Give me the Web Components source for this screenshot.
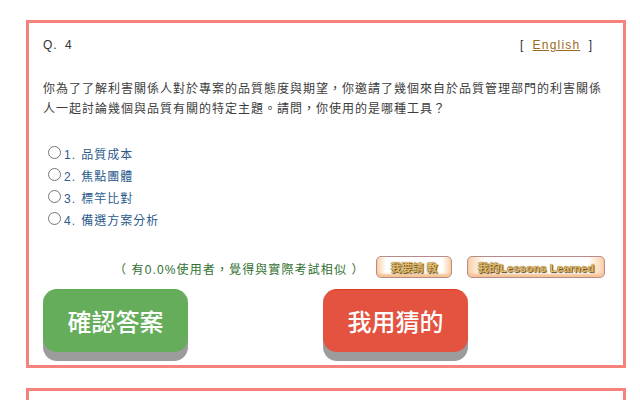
<!DOCTYPE html>
<html lang="zh-Hant-TW">
<head>
<meta charset="utf-8">
<title>Q4</title>
<style>
html, body { margin: 0; padding: 0; height: 400px; overflow: hidden; background: #fff; }
body { font-family: "Liberation Sans", "Noto Sans CJK TC", sans-serif; }
</style>
</head>
<body>
<quiz-page>
  <quiz-card>
    <quiz-head num="Q. 4"></quiz-head>
    <quiz-question>你為了了解利害關係人對於專案的品質態度與期望，你邀請了幾個來自於品質管理部門的利害關係人一起討論幾個與品質有關的特定主題。請問，你使用的是哪種工具？</quiz-question>
    <quiz-options>
      <quiz-option>1. 品質成本</quiz-option>
      <quiz-option>2. 焦點團體</quiz-option>
      <quiz-option>3. 標竿比對</quiz-option>
      <quiz-option>4. 備選方案分析</quiz-option>
    </quiz-options>
    <quiz-stats>
      <span slot="note">（ 有0.0%使用者，覺得與實際考試相似 ）</span>
      <gold-button style="width:76px">我要請 教</gold-button>
      <gold-button style="width:138px;letter-spacing:.25px">我的Lessons Learned</gold-button>
    </quiz-stats>
    <quiz-actions>
      <big-button color="#65ad5b" edge="#5cab50">確認答案</big-button>
      <big-button color="#e35340" edge="#e23c20">我用猜的</big-button>
    </quiz-actions>
  </quiz-card>
  <quiz-card class="next" style="height:12px;border-bottom:0"></quiz-card>
</quiz-page>
<script>
class quizPage extends HTMLElement{
    constructor(){
        super();
        const shadow = this.attachShadow({ mode: "open" });
        shadow.innerHTML = `
        <style>
        :host { display: flex; flex-direction: column; gap: 20px; padding: 20px 0 0 26px; width: 600px; }
        </style>
        <slot></slot>
        `
    }
}
class quizCard extends HTMLElement{
    constructor(){
        super();
        const shadow = this.attachShadow({ mode: "open" });
        shadow.innerHTML = `
        <style>
        :host {
            display: block;
            box-sizing: border-box;
            width: 600px;
            height: 348px;
            flex: none;
            border: 3px solid #f6827c;
            padding: 0 14px;
        }
        </style>
        <slot></slot>
        `
    }
}
class quizHead extends HTMLElement{
    constructor(){
        super();
        const shadow = this.attachShadow({ mode: "open" });
        shadow.innerHTML = `
        <style>
        :host {
            display: flex;
            justify-content: space-between;
            padding: 15px 16px 0 0;
            height: 14px;
            line-height: 14px;
            font-size: 12px;
            letter-spacing: 1px;
            color: #333;
        }
        .num { word-spacing: 3px; }
        .lang { word-spacing: 4px; }
        a { color: #996a1c; text-decoration: underline; letter-spacing: 1.2px; }
        </style>
        <span class="num">${this.getAttribute("num")}</span>
        <span class="lang">[ <a href="#">English</a> ]</span>
        `
    }
}
class quizQuestion extends HTMLElement{
    constructor(){
        super();
        const shadow = this.attachShadow({ mode: "open" });
        shadow.innerHTML = `
        <style>
        :host {
            display: block;
            margin-top: 26px;
            width: 562px;
            font-family: "Noto Sans CJK TC", sans-serif;
            font-size: 12px;
            line-height: 20px;
            letter-spacing: 1px;
            color: #3c3c3c;
        }
        </style>
        <slot></slot>
        `
    }
}
class quizOptions extends HTMLElement{
    constructor(){
        super();
        const shadow = this.attachShadow({ mode: "open" });
        shadow.innerHTML = `
        <style>
        :host { display: flex; flex-direction: column; margin-top: 25px; padding-left: 5px; }
        </style>
        <slot></slot>
        `
    }
}
class quizOption extends HTMLElement{
    constructor(){
        super();
        const shadow = this.attachShadow({ mode: "open" });
        shadow.innerHTML = `
        <style>
        :host {
            display: flex;
            align-items: center;
            gap: 3px;
            height: 22px;
            font-size: 12px;
            letter-spacing: 1px;
            word-spacing: 1px;
            color: #2a5a8c;
        }
        i {
            box-sizing: border-box;
            width: 13px;
            height: 13px;
            margin-top: -4px;
            border: 1px solid #767676;
            border-radius: 50%;
            background: #fff;
        }
        span { margin-top: -1px; }
        </style>
        <i></i><span><slot></slot></span>
        `
    }
}
class quizStats extends HTMLElement{
    constructor(){
        super();
        const shadow = this.attachShadow({ mode: "open" });
        shadow.innerHTML = `
        <style>
        :host {
            display: flex;
            align-items: center;
            margin-top: 25px;
            height: 22px;
            padding-left: 71px;
            font-size: 12px;
            letter-spacing: 1.12px;
            color: #2f6f2f;
        }
        .note { width: 262px; white-space: nowrap; margin-top: 2px; }
        .btns { display: flex; gap: 15px; }
        </style>
        <div class="note"><slot name="note"></slot></div>
        <div class="btns"><slot></slot></div>
        `
    }
}
class goldButton extends HTMLElement{
    constructor(){
        super();
        const shadow = this.attachShadow({ mode: "open" });
        shadow.innerHTML = `
        <style>
        :host {
            display: flex;
            align-items: center;
            justify-content: center;
            box-sizing: border-box;
            height: 22px;
            padding-bottom: 1px;
            border: 1px solid #b98a8a;
            border-radius: 5px;
            background: linear-gradient(90deg, #f9cfa6, #fff 12%, #fff 88%, #f9cfa6);
            box-shadow: inset 0 -3px 2px #f6c494;
            font-size: 11px;
            font-weight: bold;
            letter-spacing: 0;
            white-space: nowrap;
            color: #e2bb6c;
            text-shadow: 0 0 1px #5e400c, 1px 1px 1px #5e400c;
        }
        </style>
        <slot></slot>
        `
    }
}
class quizActions extends HTMLElement{
    constructor(){
        super();
        const shadow = this.attachShadow({ mode: "open" });
        shadow.innerHTML = `
        <style>
        :host { display: flex; gap: 135px; margin-top: 11px; }
        </style>
        <slot></slot>
        `
    }
}
class bigButton extends HTMLElement{
    constructor(){
        super();
        const shadow = this.attachShadow({ mode: "open" });
        const color = this.getAttribute("color");
        const edge = this.getAttribute("edge");
        shadow.innerHTML = `
        <style>
        :host {
            display: flex;
            align-items: center;
            justify-content: center;
            box-sizing: border-box;
            width: 145px;
            height: 63px;
            padding-bottom: 1px;
            background: ${color};
            border-top: 1px solid ${edge};
            border-radius: 14px;
            box-shadow: 0 9px 0 #9c9c9c;
            font-size: 24px;
            font-weight: 500;
            color: #fff;
            letter-spacing: 0;
        }
        </style>
        <slot></slot>
        `
    }
}
customElements.define("quiz-page", quizPage);
customElements.define("quiz-card", quizCard);
customElements.define("quiz-head", quizHead);
customElements.define("quiz-question", quizQuestion);
customElements.define("quiz-options", quizOptions);
customElements.define("quiz-option", quizOption);
customElements.define("quiz-stats", quizStats);
customElements.define("gold-button", goldButton);
customElements.define("quiz-actions", quizActions);
customElements.define("big-button", bigButton);
</script>
</body>
</html>
